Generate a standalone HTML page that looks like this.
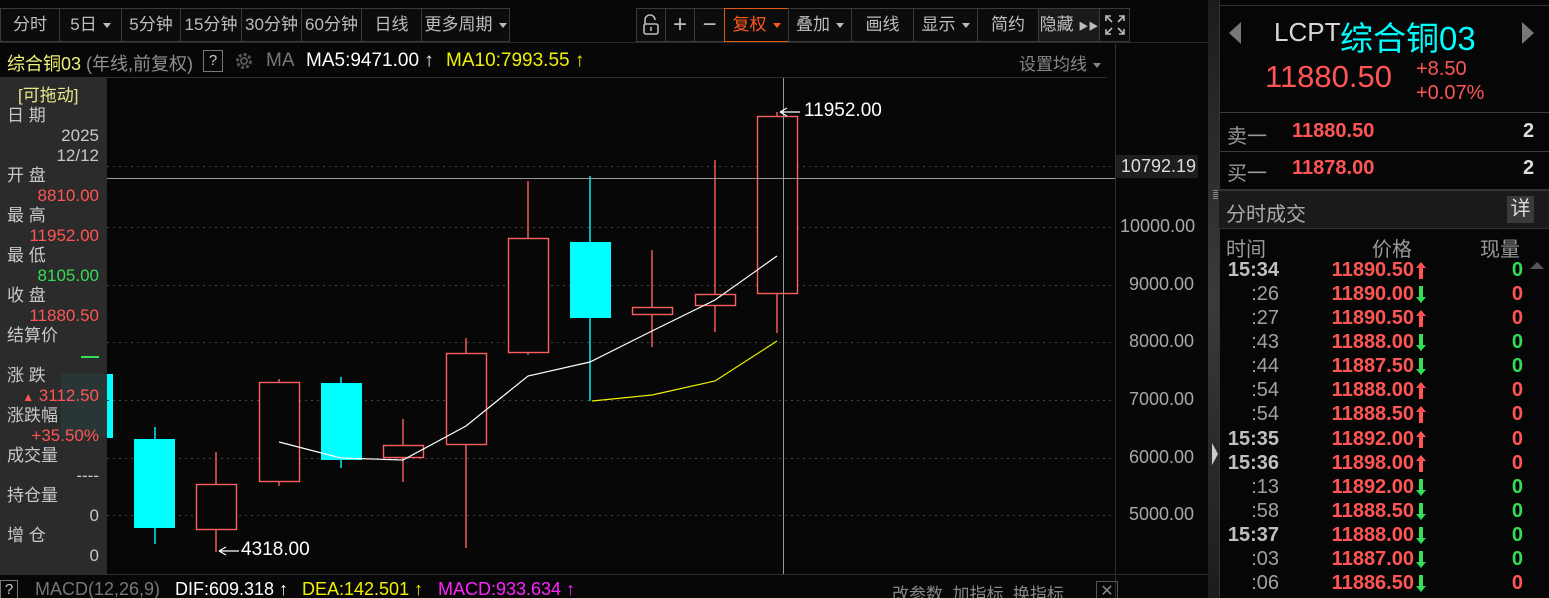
<!DOCTYPE html>
<html><head><meta charset="utf-8"><style>
*{margin:0;padding:0;box-sizing:border-box}
html,body{width:1549px;height:598px;overflow:hidden}
body{background:#070707;position:relative;font-family:"Liberation Sans","Noto Sans CJK SC",sans-serif;color:#c8c8c8}
.a{position:absolute;white-space:nowrap}
.btn{position:absolute;top:8px;height:34px;border:1px solid #3a3a3a;background:#0c0c0c;color:#bdbdbd;font-size:17px;line-height:32px;text-align:center}
.tri{display:inline-block;width:0;height:0;border-left:4px solid transparent;border-right:4px solid transparent;border-top:5px solid #bbb;vertical-align:middle;margin-left:6px}
.lp{position:absolute;font-size:17px;line-height:20px;color:#c8c8c8}
.r{color:#ff5555}.g{color:#33dd55}
.ax{position:absolute;left:1120px;font-size:18px;color:#a8a8a8}
.row{position:absolute;left:1219px;width:330px;height:24px;font-size:20px;line-height:24px;font-weight:bold}
.row .t{position:absolute;right:270px;color:#c0c0c0}
.row .t.n{font-weight:normal;color:#a0a0a0}
.row .p{position:absolute;right:135px;color:#ff5555}
.row .v{position:absolute;right:26px}
.row svg{position:absolute;left:197px;top:4px}
</style></head><body>
<!-- toolbar -->
<div class="btn" style="left:0;width:60px">分时</div>
<div class="btn" style="left:59px;width:63px">5日<span class="tri"></span></div>
<div class="btn" style="left:121px;width:60px">5分钟</div>
<div class="btn" style="left:180px;width:62px">15分钟</div>
<div class="btn" style="left:241px;width:61px">30分钟</div>
<div class="btn" style="left:301px;width:61px">60分钟</div>
<div class="btn" style="left:361px;width:61px">日线</div>
<div class="btn" style="left:421px;width:89px">更多周期<span class="tri"></span></div>
<div class="btn" style="left:636px;width:30px"><svg width="20" height="22" viewBox="0 0 20 22" style="margin-top:5px"><path d="M4 10V6a5 5 0 0 1 10 0" fill="none" stroke="#bbb" stroke-width="1.6"/><rect x="3" y="10" width="14" height="10" rx="2" fill="none" stroke="#bbb" stroke-width="1.6"/><line x1="10" y1="13" x2="10" y2="17" stroke="#bbb" stroke-width="1.6"/></svg></div>
<div class="btn" style="left:665px;width:30px;font-size:24px">+</div>
<div class="btn" style="left:694px;width:31px;font-size:24px">−</div>
<div class="btn" style="left:724px;width:65px;border-color:#e05a10;color:#ff5a1e">复权<span class="tri" style="border-top-color:#ff5a1e"></span></div>
<div class="btn" style="left:788px;width:64px">叠加<span class="tri"></span></div>
<div class="btn" style="left:851px;width:63px">画线</div>
<div class="btn" style="left:913px;width:65px">显示<span class="tri"></span></div>
<div class="btn" style="left:977px;width:62px">简约</div>
<div class="btn" style="left:1038px;width:62px;background:#1a1a1a">隐藏 <span style="font-size:10px">▶▶</span></div>
<div class="btn" style="left:1099px;width:31px"><svg width="20" height="20" viewBox="0 0 20 20" style="margin-top:6px" fill="none" stroke="#bbb" stroke-width="1.6"><path d="M1 6V1h5M1 1l6 6M14 1h5v5M19 1l-6 6M1 14v5h5M1 19l6-6M19 14v5h-5M19 19l-6-6"/></svg></div>
<div class="a" style="left:0;top:42px;width:1208px;height:1px;background:#2a2a2a"></div>

<!-- info line -->
<div class="a" style="left:7px;top:50px;font-size:18px;color:#f0f07a">综合铜03 <span style="color:#909090">(年线,前复权)</span></div>
<div class="a" style="left:203px;top:50px;width:20px;height:22px;border:1px solid #777;color:#ccc;font-size:15px;text-align:center;line-height:20px">?</div>
<svg class="a" style="left:234px;top:51px" width="20" height="20" viewBox="0 0 20 20"><circle cx="10" cy="10" r="6.5" fill="none" stroke="#555" stroke-width="3" stroke-dasharray="3 2"/><circle cx="10" cy="10" r="3" fill="none" stroke="#555" stroke-width="2"/></svg>
<div class="a" style="left:266px;top:50px;font-size:19px;color:#777">MA</div>
<div class="a" style="left:306px;top:50px;font-size:19px;color:#fff">MA5:9471.00 ↑</div>
<div class="a" style="left:446px;top:50px;font-size:19px;color:#f0f000">MA10:7993.55 ↑</div>
<div class="a" style="left:1019px;top:50px;font-size:17px;color:#888">设置均线<span class="tri" style="border-top-color:#888"></span></div>
<div class="a" style="left:0;top:77px;width:1107px;height:1px;background:#2e2e2e"></div>

<!-- left info panel -->
<div class="a" style="left:0;top:78px;width:107px;height:496px;background:#2b2b2b"></div>
<div class="a" style="left:61px;top:374px;width:46px;height:63px;background:#2a3535"></div>
<div class="a" style="left:107px;top:374px;width:6px;height:64px;background:#00ffff"></div>
<div class="lp" style="left:18px;top:86px;color:#e6e68a">[可拖动]</div>
<div class="lp" style="left:7px;top:106px">日 期</div>
<div class="lp" style="right:1450px;top:126px">2025</div>
<div class="lp" style="right:1450px;top:146px">12/12</div>
<div class="lp" style="left:7px;top:166px">开 盘</div>
<div class="lp r" style="right:1450px;top:186px">8810.00</div>
<div class="lp" style="left:7px;top:206px">最 高</div>
<div class="lp r" style="right:1450px;top:226px">11952.00</div>
<div class="lp" style="left:7px;top:246px">最 低</div>
<div class="lp g" style="right:1450px;top:266px">8105.00</div>
<div class="lp" style="left:7px;top:286px">收 盘</div>
<div class="lp r" style="right:1450px;top:306px">11880.50</div>
<div class="lp" style="left:7px;top:326px">结算价</div>
<div class="a" style="left:81px;top:356px;width:18px;height:2px;background:#33dd55"></div>
<div class="lp" style="left:7px;top:366px">涨 跌</div>
<div class="lp r" style="right:1450px;top:386px"><span style="font-size:12px">▲</span> 3112.50</div>
<div class="lp" style="left:7px;top:406px">涨跌幅</div>
<div class="lp r" style="right:1450px;top:426px">+35.50%</div>
<div class="lp" style="left:7px;top:446px">成交量</div>
<div class="lp" style="right:1450px;top:466px">----</div>
<div class="lp" style="left:7px;top:486px">持仓量</div>
<div class="lp" style="right:1450px;top:506px">0</div>
<div class="lp" style="left:7px;top:526px">增 仓</div>
<div class="lp" style="right:1450px;top:546px">0</div>

<!-- chart -->
<svg class="a" style="left:0;top:0" width="1208" height="598">
<g stroke="#444" stroke-dasharray="2 4" stroke-width="1">
<line x1="107" y1="166.5" x2="1115" y2="166.5"/>
<line x1="107" y1="227.5" x2="1115" y2="227.5"/>
<line x1="107" y1="285.5" x2="1115" y2="285.5"/>
<line x1="107" y1="342.5" x2="1115" y2="342.5"/>
<line x1="107" y1="400.5" x2="1115" y2="400.5"/>
<line x1="107" y1="458.5" x2="1115" y2="458.5"/>
<line x1="107" y1="515.5" x2="1115" y2="515.5"/>
</g>
<line x1="1115.5" y1="44" x2="1115.5" y2="598" stroke="#2e2e2e"/>
<line x1="0" y1="574.5" x2="1208" y2="574.5" stroke="#2e2e2e"/>
<g stroke="#ff5f5f" stroke-width="1.4" fill="none">
<line x1="216" y1="452" x2="216" y2="552"/><rect x="196.5" y="484.5" width="40" height="45" fill="#070707"/>
<line x1="279" y1="379" x2="279" y2="486"/><rect x="259.5" y="382.5" width="40" height="99" fill="#070707"/>
<line x1="403" y1="419" x2="403" y2="482"/><rect x="383.5" y="445.5" width="40" height="12" fill="#070707"/>
<line x1="466" y1="338" x2="466" y2="548"/><rect x="446.5" y="353.5" width="40" height="91" fill="#070707"/>
<line x1="528" y1="181" x2="528" y2="355"/><rect x="508.5" y="238.5" width="40" height="114" fill="#070707"/>
<line x1="652" y1="250" x2="652" y2="347"/><rect x="632.5" y="307.5" width="40" height="7" fill="#070707"/>
<line x1="715" y1="160" x2="715" y2="332"/><rect x="695.5" y="294.5" width="40" height="11" fill="#070707"/>
<line x1="777" y1="112" x2="777" y2="333"/><rect x="757.5" y="116.5" width="40" height="177" fill="#070707"/>
</g>
<g stroke="#00ffff" stroke-width="1.4">
<line x1="155" y1="427" x2="155" y2="544"/><line x1="341" y1="377" x2="341" y2="468"/><line x1="590" y1="176" x2="590" y2="401"/>
</g>
<g fill="#00ffff">
<rect x="134" y="439" width="41" height="89"/><rect x="321" y="383" width="41" height="77"/><rect x="570" y="242" width="41" height="76"/>
</g>
<polyline points="279,442 341,458 403,460 466,426 528,376 590,362 652,331 715,300 777,256" fill="none" stroke="#fff" stroke-width="1.2"/>
<polyline points="592,401 652,395 715,381 777,341" fill="none" stroke="#f0f000" stroke-width="1.2"/>
<line x1="107" y1="178.5" x2="1115" y2="178.5" stroke="#999"/>
<line x1="783.5" y1="78" x2="783.5" y2="574" stroke="#999"/>
<path d="M780 112h20M780 112l7-4M780 112l7 4" stroke="#fff" fill="none" stroke-width="1.2"/>
<path d="M219 551h20M219 551l7-4M219 551l7 4" stroke="#fff" fill="none" stroke-width="1.2"/>
</svg>
<div class="a" style="left:804px;top:100px;font-size:19px;color:#fff">11952.00</div>
<div class="a" style="left:241px;top:539px;font-size:19px;color:#fff">4318.00</div>
<div class="a" style="left:1116px;top:155px;width:82px;height:23px;background:#1e1e1e;font-size:18px;color:#ddd;text-align:right;padding-right:2px;line-height:23px">10792.19</div>
<div class="ax" style="top:216px">10000.00</div>
<div class="ax" style="top:274px;left:1129px">9000.00</div>
<div class="ax" style="top:331px;left:1129px">8000.00</div>
<div class="ax" style="top:389px;left:1129px">7000.00</div>
<div class="ax" style="top:447px;left:1129px">6000.00</div>
<div class="ax" style="top:504px;left:1129px">5000.00</div>

<!-- MACD bar -->
<div class="a" style="left:0;top:580px;width:18px;height:22px;border:1px solid #777;color:#ccc;font-size:15px;text-align:center">?</div>
<div class="a" style="left:35px;top:579px;font-size:18px;color:#777">MACD(12,26,9)</div>
<div class="a" style="left:175px;top:579px;font-size:18px;color:#fff">DIF:609.318 ↑</div>
<div class="a" style="left:302px;top:579px;font-size:18px;color:#f0f000">DEA:142.501 ↑</div>
<div class="a" style="left:438px;top:579px;font-size:18px;color:#ff22ff">MACD:933.634 ↑</div>
<div class="a" style="left:892px;top:580px;font-size:17px;color:#888">改参数 &nbsp;加指标 &nbsp;换指标</div>
<div class="a" style="left:1096px;top:581px;width:22px;height:22px;border:1px solid #555;color:#888;font-size:16px;text-align:center;line-height:20px">✕</div>

<!-- divider -->
<div class="a" style="left:1208px;top:0;width:11px;height:598px;background:linear-gradient(#1c1c1c,#3a3a3a 50%,#1c1c1c)"></div>
<div class="a" style="left:1212px;top:443px;width:0;height:0;border-top:11px solid transparent;border-bottom:11px solid transparent;border-left:6px solid #ccc"></div>
<div class="a" style="left:1213px;top:190px;width:5px;height:10px;background:repeating-linear-gradient(#888 0 1px,transparent 1px 2px)"></div>

<!-- right panel -->
<div class="a" style="left:1219px;top:0;width:330px;height:598px;border-left:1px solid #333;background:#060606"></div>
<div class="a" style="left:1219px;top:5px;width:330px;height:1px;background:#333"></div>
<div class="a" style="left:1229px;top:22px;width:0;height:0;border-top:11px solid transparent;border-bottom:11px solid transparent;border-right:12px solid #777"></div>
<div class="a" style="left:1522px;top:22px;width:0;height:0;border-top:11px solid transparent;border-bottom:11px solid transparent;border-left:12px solid #777"></div>
<div class="a" style="left:1274px;top:17px;font-size:26px;color:#d8d8d8">LCPT</div>
<div class="a" style="left:1340px;top:12px;font-size:33px;color:#00ffff">综合铜03</div>
<div class="a" style="left:1265px;top:59px;font-size:31px;color:#ff5555">11880.50</div>
<div class="a" style="left:1416px;top:57px;font-size:20px;color:#ff5555;line-height:24px">+8.50<br>+0.07%</div>
<div class="a" style="left:1219px;top:112px;width:330px;height:1px;background:#3a3a3a"></div>
<div class="a" style="left:1227px;top:120px;font-size:20px;color:#999">卖一</div>
<div class="a" style="left:1292px;top:120px;font-size:20px;color:#ff5555;font-weight:bold">11880.50</div>
<div class="a" style="left:1523px;top:120px;font-size:20px;color:#ddd;font-weight:bold">2</div>
<div class="a" style="left:1219px;top:151px;width:330px;height:1px;background:#3a3a3a"></div>
<div class="a" style="left:1227px;top:157px;font-size:20px;color:#999">买一</div>
<div class="a" style="left:1292px;top:157px;font-size:20px;color:#ff5555;font-weight:bold">11878.00</div>
<div class="a" style="left:1523px;top:157px;font-size:20px;color:#ddd;font-weight:bold">2</div>
<div class="a" style="left:1219px;top:189px;width:330px;height:40px;background:#1a1a1a;border-top:2px solid #333;border-bottom:1px solid #333"></div>
<div class="a" style="left:1226px;top:198px;font-size:20px;color:#aaa">分时成交</div>
<div class="a" style="left:1507px;top:196px;width:27px;height:27px;background:#3a3a3a;font-size:20px;color:#ddd;text-align:center;line-height:27px">详</div>
<div class="a" style="left:1226px;top:233px;font-size:20px;color:#999">时间</div>
<div class="a" style="left:1372px;top:233px;font-size:20px;color:#999">价格</div>
<div class="a" style="left:1480px;top:233px;font-size:20px;color:#999">现量</div>
<div class="a" style="left:1530px;top:262px;width:0;height:0;border-left:7px solid transparent;border-right:7px solid transparent;border-bottom:7px solid #555"></div>

<div class="row" style="top:258px"><span class="t">15:34</span><span class="p">11890.50</span><svg width="10" height="17"><path d="M5 0l5 6H7v11H3V6H0z" fill="#ff5555"/></svg><span class="v g">0</span></div>
<div class="row" style="top:282px"><span class="t n">:26</span><span class="p">11890.00</span><svg width="10" height="17"><path d="M5 17l5-6H7V0H3v11H0z" fill="#33dd55"/></svg><span class="v r">0</span></div>
<div class="row" style="top:306px"><span class="t n">:27</span><span class="p">11890.50</span><svg width="10" height="17"><path d="M5 0l5 6H7v11H3V6H0z" fill="#ff5555"/></svg><span class="v r">0</span></div>
<div class="row" style="top:330px"><span class="t n">:43</span><span class="p">11888.00</span><svg width="10" height="17"><path d="M5 17l5-6H7V0H3v11H0z" fill="#33dd55"/></svg><span class="v g">0</span></div>
<div class="row" style="top:354px"><span class="t n">:44</span><span class="p">11887.50</span><svg width="10" height="17"><path d="M5 17l5-6H7V0H3v11H0z" fill="#33dd55"/></svg><span class="v g">0</span></div>
<div class="row" style="top:378px"><span class="t n">:54</span><span class="p">11888.00</span><svg width="10" height="17"><path d="M5 0l5 6H7v11H3V6H0z" fill="#ff5555"/></svg><span class="v r">0</span></div>
<div class="row" style="top:402px"><span class="t n">:54</span><span class="p">11888.50</span><svg width="10" height="17"><path d="M5 0l5 6H7v11H3V6H0z" fill="#ff5555"/></svg><span class="v r">0</span></div>
<div class="row" style="top:427px"><span class="t">15:35</span><span class="p">11892.00</span><svg width="10" height="17"><path d="M5 0l5 6H7v11H3V6H0z" fill="#ff5555"/></svg><span class="v r">0</span></div>
<div class="row" style="top:451px"><span class="t">15:36</span><span class="p">11898.00</span><svg width="10" height="17"><path d="M5 0l5 6H7v11H3V6H0z" fill="#ff5555"/></svg><span class="v r">0</span></div>
<div class="row" style="top:475px"><span class="t n">:13</span><span class="p">11892.00</span><svg width="10" height="17"><path d="M5 17l5-6H7V0H3v11H0z" fill="#33dd55"/></svg><span class="v g">0</span></div>
<div class="row" style="top:499px"><span class="t n">:58</span><span class="p">11888.50</span><svg width="10" height="17"><path d="M5 17l5-6H7V0H3v11H0z" fill="#33dd55"/></svg><span class="v g">0</span></div>
<div class="row" style="top:523px"><span class="t">15:37</span><span class="p">11888.00</span><svg width="10" height="17"><path d="M5 17l5-6H7V0H3v11H0z" fill="#33dd55"/></svg><span class="v g">0</span></div>
<div class="row" style="top:547px"><span class="t n">:03</span><span class="p">11887.00</span><svg width="10" height="17"><path d="M5 17l5-6H7V0H3v11H0z" fill="#33dd55"/></svg><span class="v g">0</span></div>
<div class="row" style="top:571px"><span class="t n">:06</span><span class="p">11886.50</span><svg width="10" height="17"><path d="M5 17l5-6H7V0H3v11H0z" fill="#33dd55"/></svg><span class="v r">0</span></div>
</body></html>
